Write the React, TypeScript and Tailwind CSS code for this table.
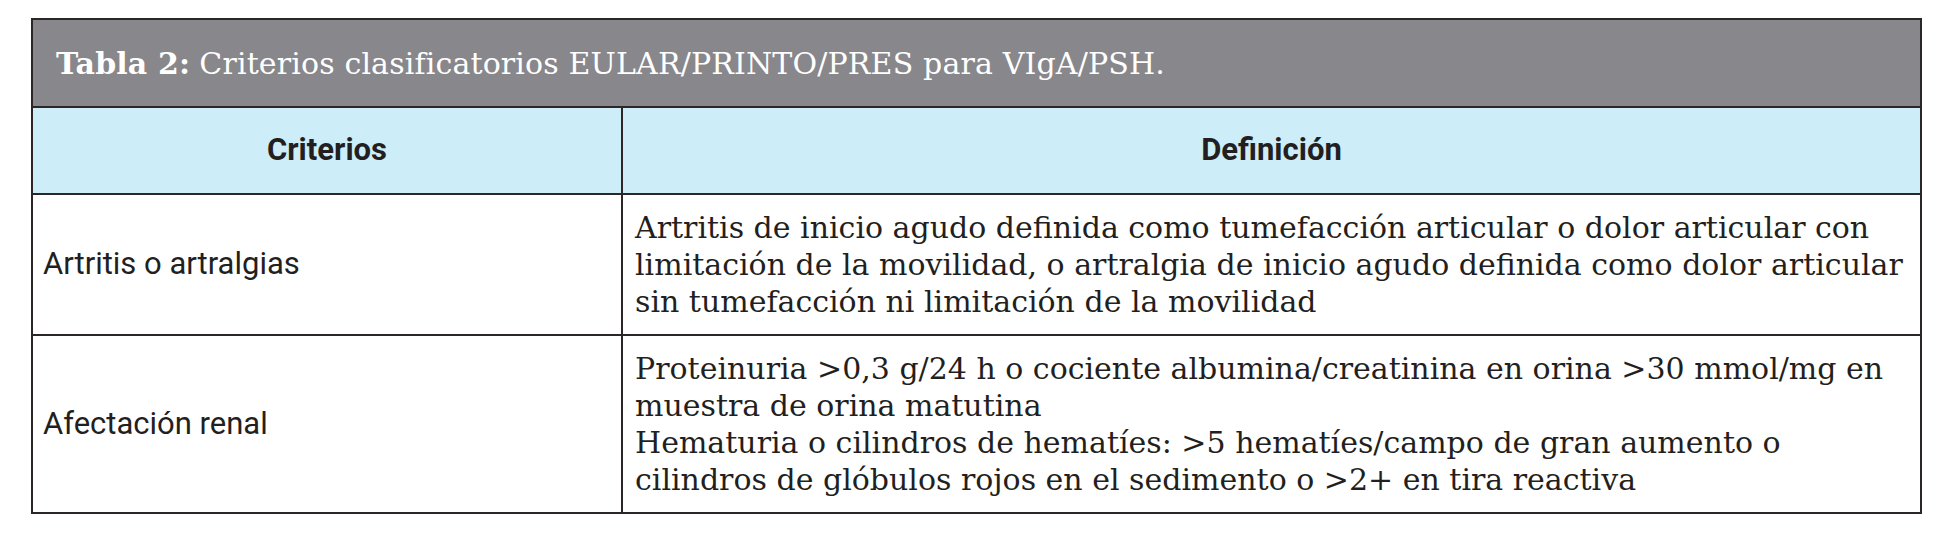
const serif = "font-['DejaVu_Serif',serif]";

export default function App() {
  return (
    <div className="min-h-[543px] w-[1959px] bg-white pt-[18px] pl-[31px]">
      <div className="w-[1891px] border-2 border-[#2b2727] text-[#231f20]">
        <div className={`flex h-[88px] items-center border-b-2 border-[#2b2727] bg-[#88878c] px-[23px] text-[30px] tracking-[0.15px] text-white ${serif}`}>
          <span className="font-bold">Tabla 2:</span>
          <span className="ml-[9px]">Criterios clasificatorios EULAR/PRINTO/PRES para VIgA/PSH.</span>
        </div>
        <div className="grid grid-cols-[590px_1fr] font-['Roboto',sans-serif]">
          <div className="flex h-[87px] items-center justify-center border-r-2 border-b-2 border-[#2b2727] bg-[#cdedf9] text-[31px] font-bold">
            Criterios
          </div>
          <div className="flex h-[87px] items-center justify-center border-b-2 border-[#2b2727] bg-[#cdedf9] text-[31px] font-bold">
            Definición
          </div>

          <div className="flex items-center border-r-2 border-b-2 border-[#2b2727] px-[10px] text-[31px]">
            Artritis o artralgias
          </div>
          <div className={`border-b-2 border-[#2b2727] py-[14px] pr-[4px] pl-[12px] text-[30px] leading-[37px] whitespace-nowrap ${serif}`}>
            Artritis de inicio agudo definida como tumefacción articular o dolor articular con
            <br />
            limitación de la movilidad, o artralgia de inicio agudo definida como dolor articular
            <br />
            sin tumefacción ni limitación de la movilidad
          </div>

          <div className="flex items-center border-r-2 border-[#2b2727] px-[10px] text-[31px]">
            Afectación renal
          </div>
          <div className={`py-[14px] pr-[4px] pl-[12px] text-[30px] leading-[37px] whitespace-nowrap ${serif}`}>
            <p>
              Proteinuria &gt;0,3 g/24 h o cociente albumina/creatinina en orina &gt;30 mmol/mg en
              <br />
              muestra de orina matutina
            </p>
            <p>
              Hematuria o cilindros de hematíes: &gt;5 hematíes/campo de gran aumento o
              <br />
              cilindros de glóbulos rojos en el sedimento o &gt;2+ en tira reactiva
            </p>
          </div>
        </div>
      </div>
    </div>
  );
}
